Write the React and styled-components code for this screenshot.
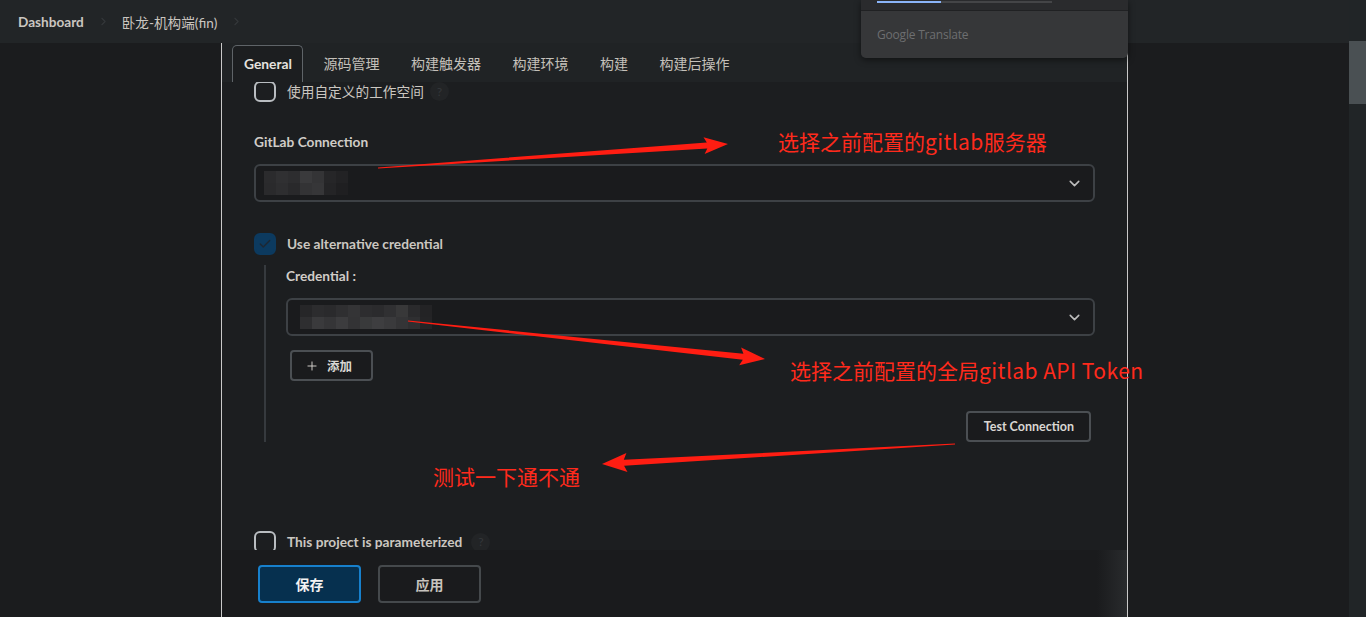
import React from 'react';
import styled, { createGlobalStyle } from 'styled-components';
import { ChevronDown, ChevronRight, Plus, Check } from 'lucide-react';

const GlobalStyle = createGlobalStyle`
  html, body {
    margin: 0;
    padding: 0;
    background: #1b1c1e;
    overflow: hidden;
  }
  * {
    box-sizing: border-box;
  }
  body {
    font-family: "Lato", "Noto Sans CJK SC", sans-serif;
  }
`;

const Page = styled.div`
  position: relative;
  display: flex;
  width: 1366px;
  height: 617px;
  overflow: hidden;
`;

const Main = styled.div`
  flex: 1;
  display: flex;
  flex-direction: column;
  min-width: 0;
`;

const Header = styled.header`
  height: 43px;
  flex-shrink: 0;
  display: flex;
  align-items: center;
  padding-left: 18px;
  background: #222527;
  font-size: 13.6px;
  color: #cac6c0;
`;

const Crumb = styled.span`
  font-weight: ${(p) => (p.$bold ? 700 : 400)};
`;

const CrumbSep = styled.span`
  display: flex;
  align-items: center;
  margin: 0 12px 0 13px;
  color: #34373a;
`;

const Body = styled.div`
  flex: 1;
  display: flex;
  min-height: 0;
`;

const Gutter = styled.div`
  width: 221px;
  flex-shrink: 0;
`;

const Panel = styled.div`
  width: 907px;
  flex-shrink: 0;
  display: flex;
  flex-direction: column;
  border-left: 1px solid #c9c9c9;
  border-right: 1px solid #c9c9c9;
  background: #1c1e20;
`;

const TabBar = styled.nav`
  height: 39px;
  flex-shrink: 0;
  display: flex;
  align-items: flex-end;
  gap: 7.5px;
  padding-left: 10px;
  background: #202325;
`;

const Tab = styled.div`
  height: 37px;
  display: flex;
  align-items: center;
  padding: ${(p) => (p.$active ? '0 10px 1px 11px' : '0 11px 3px')};
  margin-right: ${(p) => (p.$active ? '1px' : '0')};
  font-size: ${(p) => (p.$active ? '13.8px' : '14px')};
  font-weight: ${(p) => (p.$active ? 700 : 400)};
  color: ${(p) => (p.$active ? '#e4e2df' : '#c4c0ba')};
  border: 1px solid ${(p) => (p.$active ? '#5f6468' : 'transparent')};
  border-bottom: none;
  border-radius: 5px 5px 0 0;
  background: ${(p) => (p.$active ? '#1c1e20' : 'transparent')};
`;

const Content = styled.div`
  flex: 1;
  min-height: 0;
  overflow: hidden;
  padding: 0 32px;
  display: flex;
  flex-direction: column;
`;

const CheckRow = styled.div`
  display: flex;
  align-items: center;
  gap: 11px;
  margin-top: ${(p) => p.$top || 0}px;
  font-size: 13.7px;
  line-height: 18px;
  color: #cbc7c1;
  font-weight: ${(p) => (p.$bold ? 700 : 400)};
`;

const Box = styled.span`
  width: 22px;
  height: ${(p) => p.$h || 22}px;
  flex-shrink: 0;
  display: flex;
  align-items: center;
  justify-content: center;
  border-radius: 6px;
  border: 2px solid ${(p) => (p.$checked ? '#0c3a5f' : '#b9bdc1')};
  background: ${(p) => (p.$checked ? '#0c3a5f' : 'transparent')};
  color: #1e2833;
`;

const Help = styled.span`
  width: 19px;
  height: 19px;
  border-radius: 50%;
  background: #222426;
  color: #34373a;
  font-size: 12px;
  font-weight: 400;
  display: flex;
  align-items: center;
  justify-content: center;
  margin-left: ${(p) => p.$offset || 0}px;
`;

const Label = styled.div`
  margin-top: ${(p) => p.$top || 0}px;
  font-size: 13.7px;
  line-height: 18px;
  font-weight: 700;
  color: #d0ccc7;
`;

const Select = styled.div`
  position: relative;
  height: 38px;
  flex-shrink: 0;
  margin-top: 13px;
  display: flex;
  align-items: center;
  justify-content: space-between;
  padding: 0 10px 0 8px;
  border: 2px solid #3d4145;
  border-radius: 6px;
  background: #1a1b1d;
  color: #bdbdbd;
`;

const Pixels = styled.div`
  display: grid;
  grid-template-columns: repeat(${(p) => p.$cols}, 12px);
  grid-auto-rows: 12px;
  margin-left: ${(p) => p.$left || 0}px;
  filter: blur(0.3px);
`;

const Cell = styled.span`
  background: ${(p) => p.$c};
`;

const Nested = styled.div`
  margin: 10px 0 0 10px;
  padding: 2px 0 0 20px;
  border-left: 2px solid #363a3e;
  display: flex;
  flex-direction: column;
  height: 177px;
`;

const OutlineButton = styled.button`
  align-self: ${(p) => (p.$right ? 'flex-end' : 'flex-start')};
  margin: ${(p) => p.$margin};
  height: 31px;
  display: flex;
  align-items: center;
  gap: 8px;
  padding: 0 ${(p) => (p.$right ? '15px' : '19px')} 0 ${(p) => (p.$right ? '16px' : '13px')};
  border: 2px solid #4b4f53;
  border-radius: 4px;
  background: #1a1b1d;
  color: #d9d6d2;
  font-family: "Lato", "Noto Sans CJK SC", sans-serif;
  font-size: 12.5px;
  font-weight: 700;
`;

const BottomBar = styled.div`
  height: 67px;
  flex-shrink: 0;
  display: flex;
  gap: 17px;
  padding: 15px 0 0 36px;
  background: linear-gradient(to right, #1a1b1d calc(100% - 30px), #292b2d);
`;

const ActionButton = styled.button`
  width: 103px;
  height: 38px;
  border-radius: 4px;
  border: 2px solid ${(p) => (p.$primary ? '#1780cc' : '#45494c')};
  background: ${(p) => (p.$primary ? '#06304f' : 'transparent')};
  color: ${(p) => (p.$primary ? '#f2f2f2' : '#c7c3be')};
  font-family: "Lato", "Noto Sans CJK SC", sans-serif;
  font-size: 14px;
  font-weight: 700;
`;

const Scrollbar = styled.div`
  width: 17px;
  flex-shrink: 0;
  background: #212527;
  padding-top: 41px;
`;

const Thumb = styled.div`
  height: 63px;
  background: #4a5053;
`;

const Translate = styled.div`
  position: absolute;
  left: 861px;
  top: 0;
  width: 267px;
  height: 58px;
  display: flex;
  flex-direction: column;
  border-radius: 0 0 5px 5px;
  box-shadow: 0 2px 6px rgba(0, 0, 0, 0.5);
  overflow: hidden;
`;

const TranslateTop = styled.div`
  height: 11px;
  background: #2a2b2d;
  border-bottom: 1px solid #202123;
  padding: 1px 0 0 16px;
`;

const Progress = styled.div`
  width: 175px;
  height: 2px;
  background: #444547;
`;

const ProgressFill = styled.div`
  width: 64px;
  height: 2px;
  background: #8ab4f8;
`;

const TranslateBody = styled.div`
  flex: 1;
  background: #363739;
  display: flex;
  align-items: center;
  padding-left: 16px;
  font-family: "Open Sans", sans-serif;
  font-size: 12px;
  color: #6d6e70;
  letter-spacing: -0.2px;
`;

const Overlay = styled.svg`
  position: absolute;
  left: 0;
  top: 0;
  pointer-events: none;
`;

const Note = styled.div`
  position: absolute;
  left: ${(p) => p.$x}px;
  top: ${(p) => p.$y}px;
  font-family: "Noto Sans CJK SC", sans-serif;
  font-size: 21px;
  line-height: 1;
  color: #ff2a1c;
  white-space: nowrap;
`;

const Latin = styled.span`
  letter-spacing: ${(p) => p.$spacing || 0}px;
`;

const arrowPoints = (x1, y1, x2, y2, tail, body, head, headLen) => {
  const dx = x2 - x1;
  const dy = y2 - y1;
  const len = Math.hypot(dx, dy);
  const ux = dx / len;
  const uy = dy / len;
  const px = -uy;
  const py = ux;
  const bx = x2 - ux * headLen;
  const by = y2 - uy * headLen;
  const nx = bx - ux * 3;
  const ny = by - uy * 3;
  const pts = [
    [x1 + (px * tail) / 2, y1 + (py * tail) / 2],
    [bx + (px * body) / 2, by + (py * body) / 2],
    [nx + (px * head) / 2, ny + (py * head) / 2],
    [x2, y2],
    [nx - (px * head) / 2, ny - (py * head) / 2],
    [bx - (px * body) / 2, by - (py * body) / 2],
    [x1 - (px * tail) / 2, y1 - (py * tail) / 2],
  ];
  return pts.map((p) => p.map((v) => v.toFixed(1)).join(',')).join(' ');
};

const pix1 = [
  '#2b2b2d', '#303032', '#2d2d2f', '#3a3a3c', '#343436', '#262628', '#222224',
  '#2a2a2c', '#2e2e30', '#29292b', '#333335', '#363638', '#242426', '#1f1f21',
];

const pix2 = [
  '#262628', '#2c2c2e', '#2a2a2c', '#2f2f31', '#343436', '#2d2d2f', '#2b2b2d', '#303032', '#383839', '#2a2a2c', '#232325',
  '#2e2e30', '#3a3a3c', '#353537', '#3c3c3e', '#333335', '#393a3b', '#3e3e40', '#3a3a3c', '#343436', '#2f2f31', '#242426',
];

const tabs = ['General', '源码管理', '构建触发器', '构建环境', '构建', '构建后操作'];

const App = () => (
  <>
    <GlobalStyle />
    <Page>
      <Main>
        <Header>
          <Crumb $bold>Dashboard</Crumb>
          <CrumbSep><ChevronRight size={13} /></CrumbSep>
          <Crumb>卧龙-机构端(fin)</Crumb>
          <CrumbSep><ChevronRight size={13} /></CrumbSep>
        </Header>
        <Body>
          <Gutter />
          <Panel>
            <TabBar>
              {tabs.map((t, i) => (
                <Tab key={t} $active={i === 0}>{t}</Tab>
              ))}
            </TabBar>
            <Content>
              <CheckRow $top={-1}>
                <Box $h={21} />
                使用自定义的工作空间
                <Help $offset={-5}>?</Help>
              </CheckRow>

              <Label $top={31}>GitLab Connection</Label>
              <Select>
                <Pixels $cols={7}>
                  {pix1.map((c, i) => <Cell key={i} $c={c} />)}
                </Pixels>
                <ChevronDown size={17} strokeWidth={2.2} />
              </Select>

              <CheckRow $top={31} $bold>
                <Box $checked>
                  <Check size={14} strokeWidth={2.5} />
                </Box>
                Use alternative credential
              </CheckRow>

              <Nested>
                <Label>Credential :</Label>
                <Select>
                  <Pixels $cols={11} $left={4}>
                    {pix2.map((c, i) => <Cell key={i} $c={c} />)}
                  </Pixels>
                  <ChevronDown size={17} strokeWidth={2.2} />
                </Select>
                <OutlineButton $margin="14px 0 0 4px">
                  <Plus size={14} strokeWidth={1.6} />
                  添加
                </OutlineButton>
                <OutlineButton $right $margin="30px 4px 0 0">
                  Test Connection
                </OutlineButton>
              </Nested>

              <CheckRow $top={89} $bold>
                <Box />
                This project is parameterized
                <Help $offset={-2}>?</Help>
              </CheckRow>
            </Content>
            <BottomBar>
              <ActionButton $primary>保存</ActionButton>
              <ActionButton>应用</ActionButton>
            </BottomBar>
          </Panel>
        </Body>
      </Main>
      <Scrollbar>
        <Thumb />
      </Scrollbar>

      <Translate>
        <TranslateTop>
          <Progress>
            <ProgressFill />
          </Progress>
        </TranslateTop>
        <TranslateBody>Google Translate</TranslateBody>
      </Translate>

      <Overlay width="1366" height="617">
        <polygon points={arrowPoints(378, 168, 728, 144, 1, 6, 17, 21)} fill="#ff1d12" />
        <polygon points={arrowPoints(408, 321, 765, 359, 1, 6, 18, 22)} fill="#ff1d12" />
        <polygon points={arrowPoints(955, 444, 602, 464, 1, 6, 19, 22)} fill="#ff1d12" />
      </Overlay>
      <Note $x={778} $y={131}>
        选择之前配置的<Latin $spacing={0.4}>gitlab</Latin>服务器
      </Note>
      <Note $x={790} $y={360}>
        选择之前配置的全局<Latin $spacing={0.45}>gitlab API Token</Latin>
      </Note>
      <Note $x={433} $y={466}>测试一下通不通</Note>
    </Page>
  </>
);

export default App;
